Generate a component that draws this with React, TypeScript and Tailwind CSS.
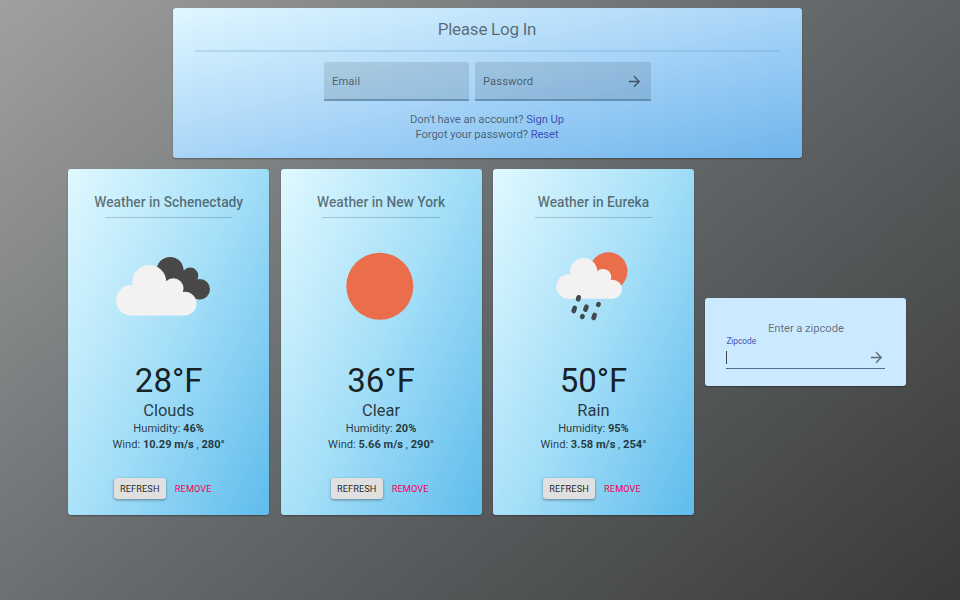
import React from "react";

type Weather = {
  city: string;
  temp: string;
  summary: string;
  humidity: string;
  wind: string;
  degrees: string;
  rule: string;
  actions: string;
  icon: React.ReactNode;
};

const CloudsIcon = () => (
  <svg width="201" height="100" viewBox="0 0 201 100">
    <g fill="#484848">
      <circle cx="102.100" cy="34.300" r="13.400" />
      <circle cx="122.100" cy="39.700" r="8.200" />
      <circle cx="131.700" cy="53.200" r="10.300" />
      <path d="M101.300 34h14l8 4 8 15v10.400l-22-6z" />
    </g>
    <g fill="#f2f2f2">
      <circle cx="63.200" cy="64.300" r="15.200" />
      <circle cx="81.300" cy="46" r="17" />
      <circle cx="105.300" cy="52.500" r="10.200" />
      <circle cx="116.700" cy="67.600" r="11.900" />
      <path d="M63.200 79.500V50h35l12 6 6.500 23.500z" />
    </g>
  </svg>
);

const SunIcon = () => (
  <svg width="201" height="100" viewBox="0 0 201 100">
    <circle cx="98.800" cy="50.200" r="33.500" fill="#ea6e4b" />
  </svg>
);

const RainIcon = () => (
  <svg width="201" height="100" viewBox="0 0 201 100">
    <circle cx="115.500" cy="35.200" r="19" fill="#ea6e4b" />
    <g fill="#f2f2f2">
      <circle cx="75.600" cy="50.500" r="12.200" />
      <circle cx="90.700" cy="35.500" r="13.600" />
      <circle cx="110" cy="41.200" r="8.300" />
      <circle cx="119.500" cy="53.200" r="9.500" />
      <path d="M75.600 62.700V40h28l12 6 3.900 16.700z" />
    </g>
    <g stroke="#414a50" strokeWidth="4.700" strokeLinecap="round">
      <path d="M85.700 61.300l-.6 2" />
      <path d="M81.700 72l-1 3" />
      <path d="M93.500 70.600l-1.100 3" />
      <path d="M105.600 68.100l-.4.700" />
      <path d="M89.600 80.200l-.4.700" />
      <path d="M101.600 78.900l-1 3" />
    </g>
  </svg>
);

const Arrow = () => (
  <svg width="17" height="17" viewBox="0 0 24 24" fill="currentColor">
    <path d="M12 4l-1.410 1.410L16.170 11H4v2h12.170l-5.580 5.590L12 20l8-8z" />
  </svg>
);

const cards: Weather[] = [
  { city: "Schenectady", temp: "28", summary: "Clouds", humidity: "46", wind: "10.29 m/s", degrees: "280", rule: "w-[127px]", actions: "pr-[6px]", icon: <CloudsIcon /> },
  { city: "New York", temp: "36", summary: "Clear", humidity: "20", wind: "5.66 m/s", degrees: "290", rule: "w-[118px]", actions: "pl-[3px]", icon: <SunIcon /> },
  { city: "Eureka", temp: "50", summary: "Rain", humidity: "95", wind: "3.58 m/s", degrees: "254", rule: "w-[117px]", actions: "pl-[3px]", icon: <RainIcon /> },
];

const paper = "rounded-[3px] shadow-[0_1px_2px_rgba(0,0,0,.2),0_1px_1px_rgba(0,0,0,.14)]";
const field = "flex h-[39px] items-center rounded-t-[2px] border-b-2 border-[#4d7593]/60 bg-black/10 pt-[2px] pl-[8.500px] pr-[8px]";

function LoginPanel() {
  return (
    <section className={`${paper} flex h-[150.500px] w-[629px] flex-col items-center bg-[linear-gradient(to_bottom_right,#e0f7ff,#a9d5f8_50%,#6fb5ec)] text-black/54`}>
      <h1 className="mt-[10px] text-[17px] leading-[22px] tracking-[-0.250px]">Please Log In</h1>
      <div className="mt-[10px] h-[2px] w-[585px] bg-[#5f9fc8]/25" />
      <div className="mt-[10.500px] flex gap-[6px] text-[11.200px] leading-[16px] tracking-[0.100px]">
        <div className={`${field} w-[145px]`}><span className="pt-px">Email</span></div>
        <div className={`${field} w-[176px] justify-between`}>
          <span className="pt-px">Password</span>
          <Arrow />
        </div>
      </div>
      <div className="mt-[10.500px] text-center text-[11.200px] leading-[15.500px] tracking-[-0.050px]">
        <p>Don't have an account? <a className="text-[#3f51b5]">Sign Up</a></p>
        <p>Forgot your password? <a className="text-[#3f51b5]">Reset</a></p>
      </div>
    </section>
  );
}

function WeatherCard({ w }: { w: Weather }) {
  return (
    <article className={`${paper} flex h-[346px] w-[201px] flex-col items-center bg-[linear-gradient(115deg,#e0f9ff,#a5dff8_50%,#5fbcec)] text-black/87`}>
      <h2 className="mt-[24px] text-[13.800px] font-medium leading-[18px] text-black/54">Weather in {w.city}</h2>
      <div className={`mt-[6px] h-px bg-black/18 ${w.rule}`} />
      <div className="mt-[18px] h-[100px]">{w.icon}</div>
      <p className="mt-[25px] text-[33px] leading-[40px]">{w.temp}°F</p>
      <p className="text-[16.500px] leading-[20px] text-black/75">{w.summary}</p>
      <div className="text-center text-[11.100px] leading-[15.500px] text-black/75">
        <p>Humidity: <b>{w.humidity}%</b></p>
        <p>Wind: <b>{w.wind}</b> , <b>{w.degrees}°</b></p>
      </div>
      <div className={`mt-[26px] flex items-center gap-[3px] ${w.actions}`}>
        <button className="h-[21px] w-[52px] rounded-[3px] bg-[#e0e0e0] text-[9.200px] tracking-[0.1px] shadow-[0_1px_3px_rgba(0,0,0,.4)]">REFRESH</button>
        <button className="h-[21px] px-[6px] text-[9.200px] tracking-[0.1px] text-[#f50057]">REMOVE</button>
      </div>
    </article>
  );
}

function ZipCard() {
  return (
    <section className={`${paper} flex h-[88px] w-[201px] flex-col bg-[#cceaff] px-[21px] pt-[22px]`}>
      <h2 className="text-center text-[11.200px] leading-[17px] tracking-[-0.050px] text-black/54">Enter a zipcode</h2>
      <label className="text-[8.300px] leading-[9px] text-[#3f51b5]">Zipcode</label>
      <div className="flex h-[22.500px] items-center justify-between border-b-[1.500px] border-[#4f6d95] pt-px text-black/54">
        <span className="h-[13px] w-px bg-black/70" />
        <Arrow />
      </div>
    </section>
  );
}

export default function App() {
  return (
    <main className="flex h-[600px] w-[960px] flex-col bg-[linear-gradient(140deg,#a0a0a0,#656a6c_48%,#393939)] pt-[7.500px] font-[Roboto,'Liberation_Sans',sans-serif]">
      <div className="flex justify-center pl-[14px]">
        <LoginPanel />
      </div>
      <div className="mt-[11px] flex items-center justify-center gap-[11.400px] pl-[14.600px]">
        {cards.map((w) => <WeatherCard key={w.city} w={w} />)}
        <ZipCard />
      </div>
    </main>
  );
}
